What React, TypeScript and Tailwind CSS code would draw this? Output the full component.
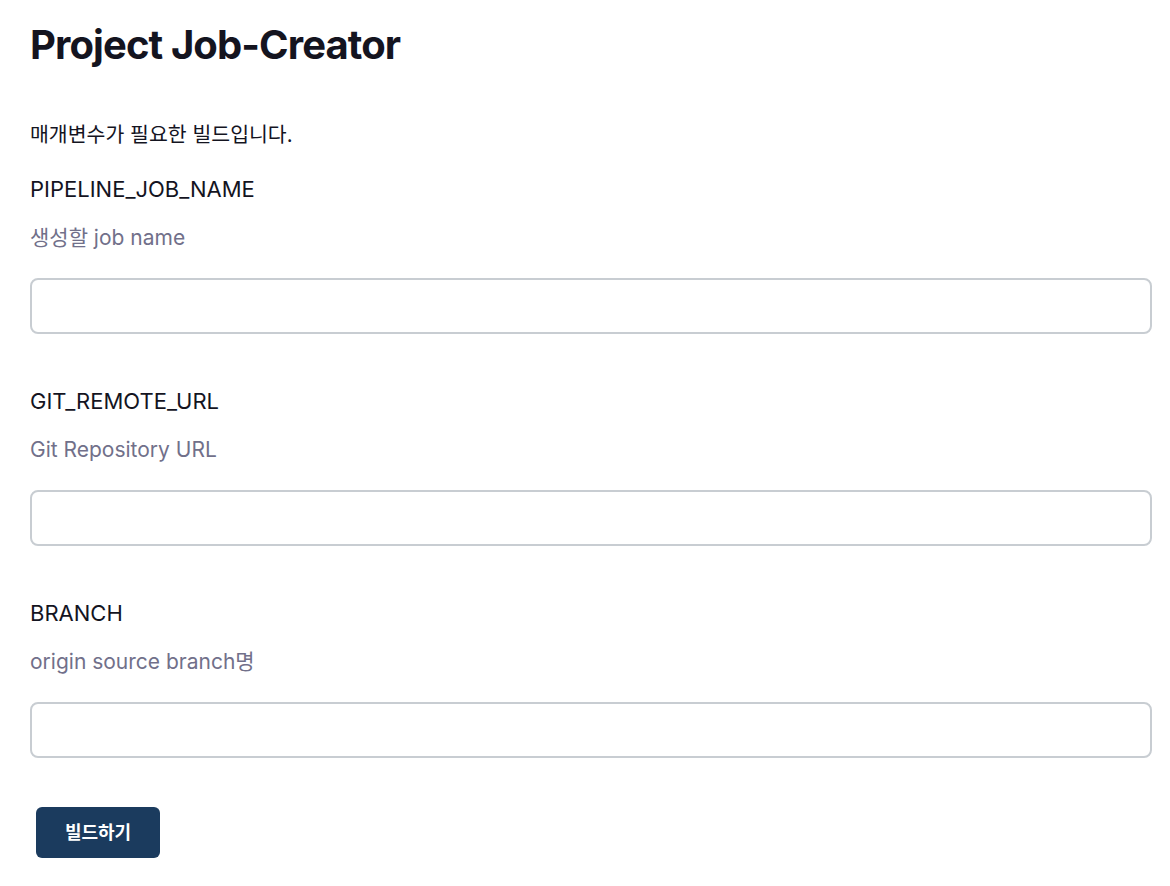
import React from "react";

const fields = [
  { name: "PIPELINE_JOB_NAME", desc: "생성할 job name" },
  { name: "GIT_REMOTE_URL", desc: "Git Repository URL" },
  { name: "BRANCH", desc: "origin source branch명" },
];

export default function App() {
  return (
    <div
      className="min-h-[886px] bg-white pl-[30px] pr-[18px]"
      style={{ fontFamily: 'Inter, "Noto Sans CJK KR", sans-serif' }}
    >
      <h1 className="pt-[21px] text-[40px] leading-[48px] font-bold text-[#14141f] tracking-[-0.9px]">
        Project Job-Creator
      </h1>
      <p className="mt-[52px] text-[20.5px] leading-[28px] text-[#14141f]">
        매개변수가 필요한 빌드입니다.
      </p>
      <div className="flex flex-col gap-[53px] mt-[26px]">
        {fields.map((f) => (
          <div key={f.name} className="flex flex-col">
            <div className="text-[22px] leading-[28px] text-[#14141f]">{f.name}</div>
            <div className="mt-[21px] text-[21px] leading-[28px] text-[#71708a]">{f.desc}</div>
            <input
              type="text"
              className="mt-[26px] h-[56px] w-full rounded-[8px] border-2 border-[#c8cdd2] bg-white px-3 outline-none"
            />
          </div>
        ))}
      </div>
      <button className="mt-[49px] ml-[6px] h-[51px] w-[124px] rounded-[6px] bg-[#1b3b5e] text-[18px] font-bold text-white">
        빌드하기
      </button>
    </div>
  );
}
